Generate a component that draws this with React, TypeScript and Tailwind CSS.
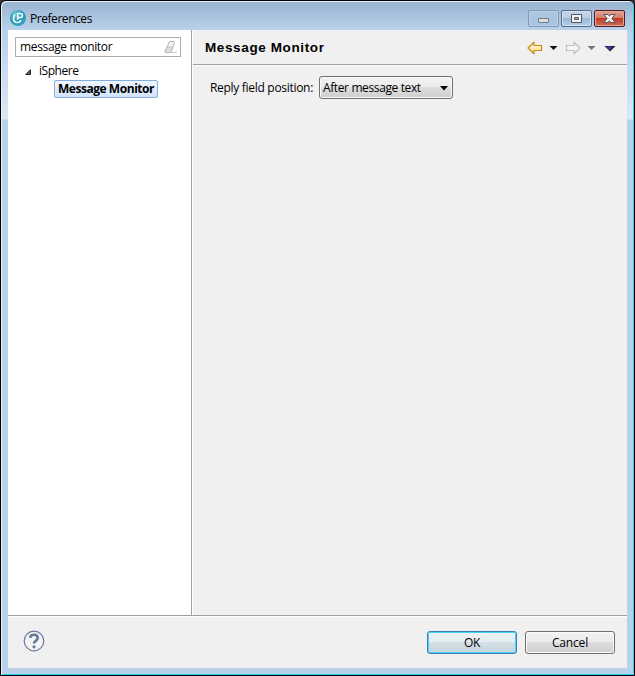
import React from 'react';

const FONT = "font-['Open_Sans','Noto_Sans',sans-serif]";

function Logo() {
  return (
    <svg className="ml-[7px] mt-[9px] shrink-0" width="18" height="18" viewBox="0 0 18 18">
      <defs>
        <radialGradient id="ball" cx="0.35" cy="0.25" r="0.85">
          <stop offset="0" stopColor="#6fcbdb" />
          <stop offset="0.55" stopColor="#2397b1" />
          <stop offset="1" stopColor="#35a8be" />
        </radialGradient>
      </defs>
      <circle cx="9" cy="9" r="8" fill="url(#ball)" />
      <path d="M5.8 5.5C4.4 7.5 4.2 9.6 4.6 11C5.6 14.3 11.2 14.3 11.9 10.8" fill="none" stroke="#f2fbfd" strokeWidth="1.6" />
      <path d="M8.7 10.8V4.5H11.3C14.2 4.5 14.2 8.6 11.3 8.6H8.7" fill="none" stroke="#f2fbfd" strokeWidth="1.5" />
    </svg>
  );
}

function CaptionButtons() {
  const base = 'flex h-[17px] w-[31px] items-center justify-center rounded-[2px] border';
  return (
    <div className="mr-[9px] mt-[10px] flex gap-[2px]">
      <div className={`${base} border-[#7f98b5] bg-gradient-to-b from-[#aec5df] to-[#a9c4e1] shadow-[inset_0_0_0_1px_#bdd2e8]`}>
        <svg width="13" height="11"><rect x="1.5" y="5.5" width="10" height="4" rx="0.5" fill="#dedede" stroke="#737b87" /></svg>
      </div>
      <div className={`${base} border-[#566b86] bg-[linear-gradient(#c3d5e8_0,#bbcee3_45%,#9cb6d2_50%,#b7cee6_100%)] shadow-[inset_0_0_0_1px_#d1e0f0]`}>
        <svg width="13" height="11"><path d="M1.5 1.5h10v8h-10z M4.5 4.5h4v2h-4z" fill="#f2f2f2" fillRule="evenodd" stroke="#535666" /></svg>
      </div>
      <div className={`${base} border-[#571c20] bg-[linear-gradient(#dfa394_0,#d27e6a_45%,#bd3c26_50%,#cf6d55_100%)] shadow-[inset_0_0_0_1px_#e2a697]`}>
        <svg width="13" height="11" viewBox="0 0 13 11"><path d="M1 1.5H5L6.5 3.2L8 1.5H12L8.9 5.5L12 9.5H8L6.5 7.8L5 9.5H1L4.1 5.5Z" fill="#f4f4f4" stroke="#535666" /></svg>
      </div>
    </div>
  );
}

function Toolbar() {
  return (
    <svg className="mr-[8px] mt-[10px]" width="92" height="16" viewBox="527 40 92 16">
      <defs>
        <linearGradient id="back" x2="0" y2="1"><stop offset="0" stopColor="#fffbe9" /><stop offset="1" stopColor="#ffdc78" /></linearGradient>
      </defs>
      <path d="M528 48L534 42.2V45.5H541.5V50.5H534V53.8Z" fill="url(#back)" stroke="#c58b18" strokeWidth="1.2" strokeLinejoin="round" />
      <path d="M549.5 46H557.5L553.5 50Z" fill="#111" />
      <path d="M580 48L574 42.2V45.5H566.5V50.5H574V53.8Z" fill="#f7f7f5" stroke="#bfbfb9" strokeWidth="1.2" strokeLinejoin="round" />
      <path d="M587.5 46H595.5L591.5 50Z" fill="#747474" />
      <path d="M604.5 46H615.5L610 51.5Z" fill="#1d1b3a" />
      <path d="M605.5 46.5H612L609.5 50.5Z" fill="#433a94" />
    </svg>
  );
}

export default function App() {
  return (
    <div className="h-[676px] w-[635px] bg-[#30333a]">
      <div className={`flex h-full w-full flex-col overflow-hidden rounded-t-[6px] border border-black bg-[linear-gradient(#98b2d1_0,#b9d1ea_29px,#dbe7f5_118px,#b9d1ea_119px)] text-[12px] leading-[16px] tracking-[-0.3px] text-black shadow-[inset_1px_1px_0_#e8f2fb,inset_-1px_-1px_0_#28d4ec] ${FONT}`}>
        <div className="-mt-px flex h-[29px] shrink-0">
          <div className="flex min-w-0 flex-1 pl-px">
            <Logo />
            <span className="ml-[3px] mt-[11px] whitespace-nowrap tracking-[-0.45px]">Preferences</span>
          </div>
          <CaptionButtons />
        </div>
        <div className="mx-[7px] mb-[7px] mt-px flex h-[638px] shrink-0 flex-col bg-[#f0f0f0]">
          <div className="flex h-[585px]">
            <aside className="w-[183px] shrink-0 bg-white">
              <div className="ml-[7px] mt-[7px] flex h-[20px] w-[166px] items-center justify-between border border-[#abadb3] pl-[4px] pr-[2px]">
                <span className="whitespace-nowrap tracking-[-0.35px]">message monitor</span>
                <svg width="14" height="14" viewBox="0 0 14 14">
                  <path d="M5.5 1.5H10L10.5 2.5L7 12.5H1.5L1 11.5Z" fill="#f4f4f2" stroke="#b5b5b2" />
                  <path d="M2.6 7H8.7L7 12.5H1.5L1 11.5Z" fill="#dcdcd9" stroke="#b5b5b2" strokeWidth="0.7" />
                  <path d="M8 12.5H13" stroke="#c4c4c4" />
                </svg>
              </div>
              <div className="mt-[5px] flex h-[18px] items-center pl-[17px]">
                <svg className="mt-px" width="6" height="6"><path d="M5.5 0.7V5.5H0.7Z" fill="#595959" stroke="#262626" /></svg>
                <span className="ml-[8px] tracking-[-0.45px]">iSphere</span>
              </div>
              <div className="ml-[46px] flex h-[18px] w-[104px] items-center justify-center rounded-[2px] border border-[#84acdd] bg-gradient-to-b from-[#eff6ff] to-[#d1e5ff]">
                <span className="whitespace-nowrap font-bold tracking-[-0.45px]">Message Monitor</span>
              </div>
            </aside>
            <div className="w-[2px] shrink-0 border-l border-[#a0a0a0] bg-white" />
            <main className="min-w-0 flex-1">
              <header className="flex h-[36px] justify-between border-b border-white shadow-[inset_0_-1px_0_#a0a0a0]">
                <h1 className="ml-[12px] mt-[10px] whitespace-nowrap font-['Liberation_Sans',sans-serif] text-[13.5px] font-bold tracking-[0.62px]">Message Monitor</h1>
                <Toolbar />
              </header>
              <div className="ml-[17px] mt-[10px] flex h-[23px] items-center">
                <span className="w-[109px] whitespace-nowrap">Reply field position:</span>
                <div className="flex h-[23px] w-[134px] items-center justify-between rounded-[3px] border border-[#707070] bg-[linear-gradient(#f2f2f2_0,#ebebeb_49%,#dddddd_50%,#cfcfcf_100%)] pl-[3px] pr-[4px] shadow-[inset_0_0_0_1px_#fafafa]">
                  <span className="whitespace-nowrap tracking-[-0.38px]">After message text</span>
                  <svg className="mt-px" width="8" height="5"><path d="M0 0H8L4 4.5Z" fill="#000" /></svg>
                </div>
              </div>
            </main>
          </div>
          <footer className="flex h-[53px] items-start border-t border-[#a0a0a0] shadow-[inset_0_1px_0_#fff]">
            <svg className="ml-[15px] mt-[14px]" width="22" height="22" viewBox="0 0 22 22">
              <circle cx="11" cy="11" r="9.8" fill="#f3f3f3" stroke="#667b9b" strokeWidth="1.2" />
              <path d="M7.2 7.8C7.7 3.7 14.7 3.8 14.7 7.9C14.7 10.6 11.1 10.7 11.1 13.5" fill="none" stroke="#667b9b" strokeWidth="2.7" />
              <circle cx="11" cy="16.8" r="1.6" fill="#667b9b" />
            </svg>
            <div className="ml-auto mr-[12px] mt-[15px] flex gap-[8px]">
              <button className="flex h-[23px] w-[90px] items-center justify-center rounded-[3px] border border-[#3c7fb1] bg-[linear-gradient(#eef3f5_0,#e4ebef_49%,#d2dfe6_50%,#c8d5dc_100%)] tracking-[-0.35px] shadow-[inset_0_0_0_1px_#48d4f5]">OK</button>
              <button className="flex h-[23px] w-[90px] items-center justify-center rounded-[3px] border border-[#707070] bg-[linear-gradient(#f2f2f2_0,#ebebeb_49%,#dddddd_50%,#cfcfcf_100%)] tracking-[-0.15px] shadow-[inset_0_0_0_1px_#fafafa]">Cancel</button>
            </div>
          </footer>
        </div>
      </div>
    </div>
  );
}
